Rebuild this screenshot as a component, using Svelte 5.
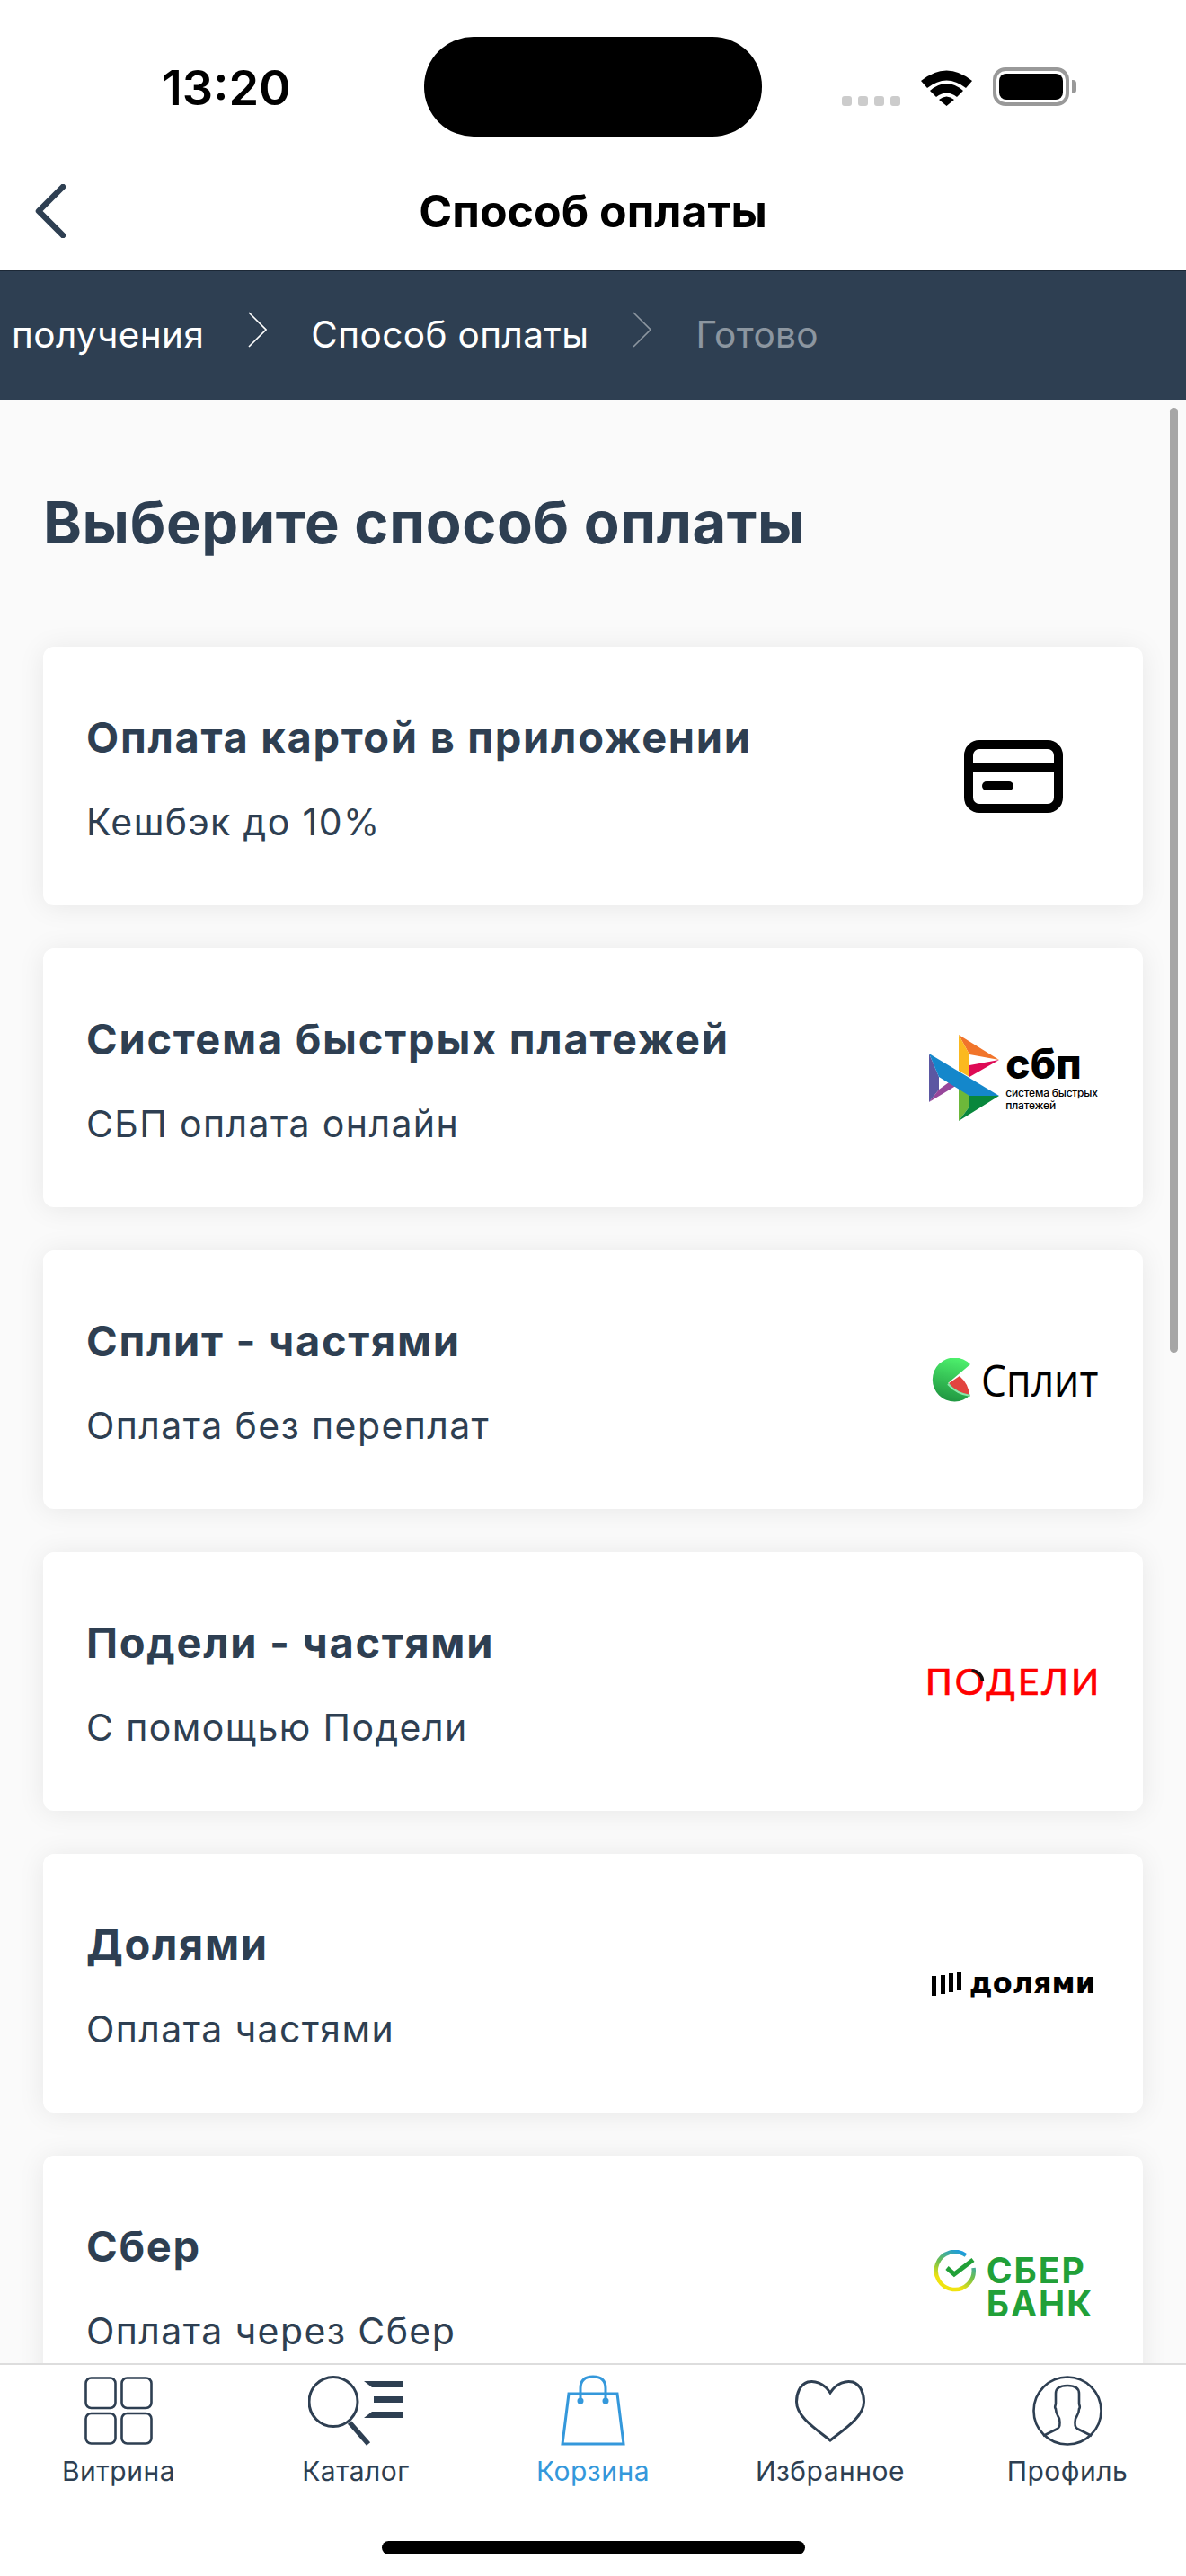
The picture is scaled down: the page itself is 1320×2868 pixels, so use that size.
<script>
  const methods = [
    { title: 'Оплата картой в приложении', sub: 'Кешбэк до 10%', logo: 'card' },
    { title: 'Система быстрых платежей', sub: 'СБП оплата онлайн', logo: 'sbp' },
    { title: 'Сплит - частями', sub: 'Оплата без переплат', logo: 'split' },
    { title: 'Подели - частями', sub: 'С помощью Подели', logo: 'podeli' },
    { title: 'Долями', sub: 'Оплата частями', logo: 'dolyami' },
    { title: 'Сбер', sub: 'Оплата через Сбер', logo: 'sber' }
  ];
  const tabs = [
    { label: 'Витрина', icon: 'grid' },
    { label: 'Каталог', icon: 'search' },
    { label: 'Корзина', icon: 'bag', active: true },
    { label: 'Избранное', icon: 'heart' },
    { label: 'Профиль', icon: 'user' }
  ];
</script>

<div class="phone">
  <header class="status">
    <span class="time">13:20</span>
    <div class="island"></div>
    <div class="status-icons">
      <div class="dots"><i></i><i></i><i></i><i></i></div>
      <svg width="57" height="42" viewBox="0 0 57 42">
        <path d="M0 14 Q28.5 -9 57 14 L50 22 Q28.5 5 7 22Z M10 25 Q28.5 9 47 25 L40 32 Q28.5 23 17 32Z M20 35 Q28.5 28 37 35 L28.5 42Z" fill="#000"/>
      </svg>
      <div class="battery"><div class="battery-fill"></div><div class="battery-cap"></div></div>
    </div>
  </header>

  <nav class="topbar">
    <svg class="back" width="36" height="60" viewBox="0 0 36 60" fill="none">
      <path d="M32 3 L5 30 L32 57" stroke="#2e3f52" stroke-width="6.5" stroke-linecap="round" stroke-linejoin="round"/>
    </svg>
    <h2>Способ оплаты</h2>
  </nav>

  <div class="steps">
    <span>получения</span>
    <svg width="21" height="40" viewBox="0 0 21 40" fill="none"><path d="M1 1 L20 20 L1 39" stroke="#fff" stroke-width="1.6"/></svg>
    <span>Способ оплаты</span>
    <svg class="dim" width="21" height="40" viewBox="0 0 21 40" fill="none"><path d="M1 1 L20 20 L1 39" stroke="#fff" stroke-width="1.6"/></svg>
    <span class="dim">Готово</span>
  </div>

  <main class="content">
    <div class="scrollbar"></div>
    <h1>Выберите способ оплаты</h1>
    <div class="cards">
      {#each methods as m}
        <section class="card">
          <div class="card-text">
            <h3>{m.title}</h3>
            <p>{m.sub}</p>
          </div>
          <div class="logo">
            {#if m.logo === 'card'}
              <svg width="110" height="81" viewBox="0 0 110 81" fill="none">
                <rect x="5" y="5" width="100" height="71" rx="12" stroke="#000" stroke-width="10"/>
                <path d="M5 31 H105" stroke="#000" stroke-width="10"/>
                <path d="M25 51 H50" stroke="#000" stroke-width="10" stroke-linecap="round"/>
              </svg>
            {:else if m.logo === 'sbp'}
              <div class="sbp">
                <svg width="78" height="96" viewBox="0 0 78 96">
                  <path d="M33 0 L78 28 L45 22Z" fill="#f1752b"/>
                  <path d="M33 0 L45 22 L45 47 L33 40Z" fill="#fbb91f"/>
                  <path d="M45 34 L78 28 L45 47Z" fill="#de0a55"/>
                  <path d="M0 21 L11 47 L11 61 L0 75Z" fill="#5b57a2"/>
                  <path d="M0 75 L11 61 L29 48 L33 55Z" fill="#97479b"/>
                  <path d="M33 56 L45 68 L45 80 L33 96Z" fill="#6db83a"/>
                  <path d="M45 68 L78 68 L33 96 L45 80Z" fill="#08873c"/>
                  <path d="M0 21 L78 68 L45 68 L11 47Z" fill="#1487cb"/>
                </svg>
                <div class="sbp-text">
                  <strong>сбп</strong>
                  <small>система быстрых<br>платежей</small>
                </div>
              </div>
            {:else if m.logo === 'split'}
              <div class="split">
                <svg width="43" height="49" viewBox="0 0 43 49">
                  <defs>
                    <linearGradient id="sg" x1="0.6" y1="0" x2="0.4" y2="1">
                      <stop offset="0" stop-color="#4df06c"/>
                      <stop offset="1" stop-color="#1f9440"/>
                    </linearGradient>
                  </defs>
                  <path d="M43 7 A24.5 24.5 0 1 0 43 41 L18 28Z" fill="url(#sg)"/>
                  <path d="M19 28 L31 20 Q41 29 42 41 Q28 39 19 28Z" fill="#e2443f"/>
                  <path d="M18 29 Q28 40 43 42" fill="none" stroke="#8be8aa" stroke-width="2"/>
                </svg>
                <span>Сплит</span>
              </div>
            {:else if m.logo === 'podeli'}
              <div class="podeli">
                <span>ПОДЕЛИ</span>
                <svg class="podeli-arc" width="20" height="22" viewBox="0 0 20 22" fill="none">
                  <path d="M2.5 3 A12 12 0 0 1 14.5 15" stroke="#111" stroke-width="3.6"/>
                </svg>
              </div>
            {:else if m.logo === 'dolyami'}
              <div class="dolyami">
                <svg width="33" height="27" viewBox="0 0 33 27" fill="#000">
                  <rect x="0" y="5" width="5" height="22"/><rect x="10" y="4" width="5" height="21"/><rect x="19" y="2" width="5" height="21"/><rect x="28" y="0" width="5" height="21"/>
                </svg>
                <span>долями</span>
              </div>
            {:else}
              <div class="sber">
                <svg width="47" height="47" viewBox="0 0 47 47" fill="none">
                  <defs>
                    <linearGradient id="sb" x1="0.7" y1="0" x2="0.2" y2="1">
                      <stop offset="0" stop-color="#1b9be0"/>
                      <stop offset="0.45" stop-color="#6fc04c"/>
                      <stop offset="0.8" stop-color="#f0e310"/>
                    </linearGradient>
                  </defs>
                  <path d="M36 6 A21 21 0 1 0 44.5 20" stroke="url(#sb)" stroke-width="4.5"/>
                  <path d="M15 20 L23 27 L44 11" stroke="#21a038" stroke-width="5"/>
                </svg>
                <span>СБЕР<br>БАНК</span>
              </div>
            {/if}
          </div>
        </section>
      {/each}
    </div>
  </main>

  <footer class="tabbar">
    <div class="tabs">
      {#each tabs as t}
        <div class="tab" class:active={t.active}>
          <div class="tab-icon">
            {#if t.icon === 'grid'}
              <svg width="76" height="76" viewBox="0 0 76 76" fill="none" stroke="#2e3f52" stroke-width="2.6">
                <rect x="1.5" y="1.5" width="33" height="33.5" rx="6"/><rect x="41.5" y="1.5" width="33" height="33.5" rx="6"/>
                <rect x="1.5" y="41" width="33" height="33.5" rx="6"/><rect x="41.5" y="41" width="33" height="33.5" rx="6"/>
              </svg>
            {:else if t.icon === 'search'}
              <svg width="106" height="78" viewBox="0 0 106 78" fill="none" stroke="#2e3f52">
                <ellipse cx="28" cy="29" rx="27" ry="27.5" stroke-width="3"/>
                <path d="M46 52 L67 76" stroke-width="5.5"/>
                <path d="M62 6 L105 6 L105 13 L71 13Z M73 23 L105 23 L105 30 L73 30Z M71 40 L105 40 L105 47 L62 47Z" fill="#2e3f52" stroke="none"/>
              </svg>
            {:else if t.icon === 'bag'}
              <svg width="72" height="80" viewBox="0 0 72 80" fill="none" stroke="#3498db" stroke-width="3">
                <path d="M9 21 H63 L70 77 H2Z"/>
                <path d="M22 29 V15 Q22 2 36 2 Q50 2 50 15 V29"/>
                <circle cx="22" cy="29" r="3.5" fill="#3498db" stroke="none"/><circle cx="50" cy="29" r="3.5" fill="#3498db" stroke="none"/>
              </svg>
            {:else if t.icon === 'heart'}
              <svg width="78" height="70" viewBox="0 0 78 70" fill="none" stroke="#2e3f52" stroke-width="3">
                <path d="M39 15 C32 4 21 1 14 3 C5 6 1.5 16 1.5 25 C1.5 41 21 54 39 68 C57 54 76.5 41 76.5 25 C76.5 16 73 6 64 3 C57 1 46 4 39 15Z"/>
              </svg>
            {:else}
              <svg width="78" height="78" viewBox="0 0 78 78" fill="none" stroke="#2e3f52" stroke-width="2.6">
                <ellipse cx="39" cy="39" rx="37.5" ry="37.5"/>
                <path d="M12 67 L28 59 C31 57 31 53 30 48 C29 45 26 43 26 37 C24 35 26 33 26 31 V20 C26 14 31 11 39 11 C47 11 52 14 52 20 V31 C52 33 54 35 52 37 C52 43 49 45 48 48 C47 53 47 57 50 59 L66 67"/>
              </svg>
            {/if}
          </div>
          <span>{t.label}</span>
        </div>
      {/each}
    </div>
    <div class="home-indicator"></div>
  </footer>
</div>

<style>
  :global(body) {
    margin: 0;
    background: #fff;
  }

  .phone {
    width: 1320px;
    height: 2868px;
    display: flex;
    flex-direction: column;
    overflow: hidden;
    font-family: Inter, "Noto Sans", sans-serif;
    color: #2e3f52;
    background: #fafafa;
  }

  .status {
    height: 160px;
    flex: none;
    background: #fff;
    display: flex;
    align-items: center;
    padding: 35px 0 0 180px;
    box-sizing: border-box;
    position: relative;
  }
  .time {
    font-size: 54px;
    font-weight: 600;
    color: #000;
  }
  .island {
    position: absolute;
    left: 472px;
    top: 41px;
    width: 376px;
    height: 111px;
    border-radius: 55px;
    background: #000;
  }
  .status-icons {
    position: absolute;
    left: 937px;
    top: 75px;
    display: flex;
    align-items: flex-end;
    gap: 23px;
  }
  .dots {
    display: flex;
    gap: 7px;
  }
  .dots i {
    width: 11px;
    height: 11px;
    border-radius: 3px;
    background: #ccc;
  }
  .battery {
    width: 85px;
    height: 43px;
    box-sizing: border-box;
    border: 4px solid #999;
    border-radius: 14px;
    padding: 3px;
    position: relative;
  }
  .battery-fill {
    height: 100%;
    background: #000;
    border-radius: 8px;
  }
  .battery-cap {
    position: absolute;
    right: -12px;
    top: 10px;
    width: 5px;
    height: 15px;
    background: #999;
    border-radius: 0 4px 4px 0;
  }

  .topbar {
    height: 141px;
    flex: none;
    box-sizing: border-box;
    padding-top: 8px;
    background: #fff;
    display: flex;
    align-items: center;
    justify-content: center;
    position: relative;
  }
  .topbar h2 {
    margin: 0;
    font-size: 50px;
    font-weight: 700;
    color: #000;
  }
  .back {
    position: absolute;
    left: 38px;
    top: 45px;
  }

  .steps {
    height: 144px;
    flex: none;
    background: #2e3f52;
    color: #fff;
    display: flex;
    align-items: center;
    gap: 49px;
    padding: 0 0 3px 13px;
    font-size: 40.5px;
    letter-spacing: 0.4px;
    white-space: nowrap;
    box-sizing: border-box;
    border-top: 1px solid #1c2836;
  }
  .steps svg {
    margin-top: -10px;
  }
  .steps .dim {
    opacity: 0.45;
  }

  .content {
    flex: 1;
    min-height: 0;
    padding: 0 48px;
    position: relative;
    overflow: hidden;
  }
  .scrollbar {
    position: absolute;
    right: 9px;
    top: 9px;
    width: 9px;
    height: 1052px;
    border-radius: 5px;
    background: #a6a6a6;
  }
  .content h1 {
    margin: 0;
    padding: 98px 0 99px;
    font-size: 65px;
    line-height: 78px;
    font-weight: 700;
    letter-spacing: 0.6px;
  }
  .cards {
    display: flex;
    flex-direction: column;
    gap: 48px;
  }
  .card {
    height: 288px;
    flex: none;
    display: flex;
    align-items: center;
    justify-content: space-between;
    background: #fff;
    border-radius: 12px;
    box-shadow: 0 2px 30px rgba(0, 0, 0, 0.08);
    padding: 0 48px;
  }
  .card-text {
    padding-top: 4px;
  }
  .card-text h3 {
    margin: 0 0 40px;
    font-size: 47px;
    line-height: 58px;
    font-weight: 700;
    letter-spacing: 1.7px;
  }
  .card-text p {
    margin: 0;
    font-size: 41px;
    line-height: 50px;
    letter-spacing: 1.4px;
  }
  .logo {
    width: 192px;
    display: flex;
    justify-content: center;
  }

  .sbp {
    display: flex;
    align-items: center;
    gap: 7px;
  }
  .sbp-text strong {
    display: block;
    font-size: 46px;
    line-height: 42px;
    font-weight: 800;
    color: #000;
  }
  .sbp-text small {
    display: block;
    margin-top: 5px;
    font-size: 12px;
    line-height: 14px;
    font-weight: 500;
    letter-spacing: -0.2px;
    color: #000;
  }
  .split {
    display: flex;
    align-items: center;
    gap: 12px;
  }
  .split span {
    display: inline-block;
    width: 128px;
    font-size: 50px;
    line-height: 50px;
    font-family: "Open Sans", sans-serif;
    color: #000;
    transform: scaleX(0.89);
    transform-origin: left;
  }
  .podeli {
    position: relative;
    height: 44px;
    display: flex;
    align-items: center;
  }
  .podeli span {
    font-size: 41px;
    line-height: 44px;
    color: #ff0000;
    font-family: Lato, "Noto Sans", sans-serif;
    letter-spacing: 3px;
    -webkit-text-stroke: 0.7px #ff0000;
  }
  .podeli-arc {
    position: absolute;
    left: 49px;
    top: 7px;
  }
  .dolyami {
    display: flex;
    align-items: center;
    gap: 9px;
  }
  .dolyami span {
    font-size: 32px;
    line-height: 36px;
    font-weight: 700;
    color: #000;
    font-family: "DejaVu Sans", sans-serif;
  }
  .sber {
    display: flex;
    align-items: flex-start;
    gap: 12px;
  }
  .sber span {
    padding-top: 4px;
    font-size: 39px;
    line-height: 37px;
    font-weight: 700;
    color: #21a038;
    letter-spacing: 2px;
  }

  .tabbar {
    height: 237px;
    flex: none;
    background: #fff;
    border-top: 2px solid #ddd;
    box-sizing: border-box;
    position: relative;
    z-index: 1;
  }
  .tabs {
    display: flex;
    padding-top: 11px;
  }
  .tab {
    flex: 1;
    display: flex;
    flex-direction: column;
    align-items: center;
    font-size: 30px;
    letter-spacing: 0.5px;
  }
  .tab-icon {
    height: 80px;
    display: flex;
    align-items: center;
    margin-bottom: 9px;
  }
  .tab.active {
    color: #3498db;
  }
  .home-indicator {
    width: 471px;
    height: 15px;
    border-radius: 8px;
    background: #000;
    position: absolute;
    left: 425px;
    top: 196px;
  }
</style>
